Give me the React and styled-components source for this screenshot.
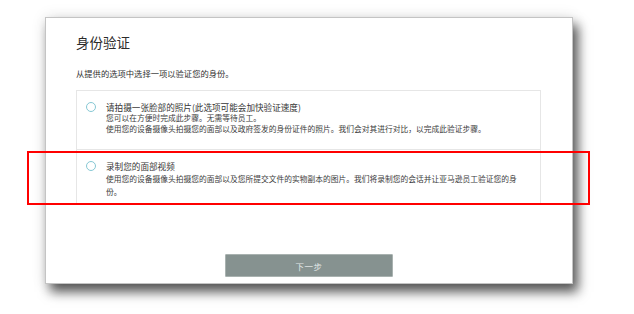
import React from "react";
import styled, { createGlobalStyle } from "styled-components";

const GlobalStyle = createGlobalStyle`
  html, body {
    margin: 0;
    padding: 0;
    background: #ffffff;
  }
  body {
    font-family: "Noto Sans CJK SC", "Noto Sans", "Liberation Sans", sans-serif;
  }
`;

const Page = styled.div`
  position: relative;
  width: 634px;
  height: 314px;
  padding: 17px 0 0 45px;
  box-sizing: border-box;
  overflow: hidden;
  background: #ffffff;
`;

const Card = styled.div`
  width: 528px;
  height: 267px;
  box-sizing: border-box;
  background: #ffffff;
  border: 1px solid #c4c4c4;
  box-shadow: 5px 8px 11px rgba(0, 0, 0, 0.65), 0 0 14px rgba(0, 0, 0, 0.1);
  padding: 15px 0 0 30px;
  display: flex;
  flex-direction: column;
`;

const Title = styled.h1`
  margin: 0;
  font-size: 13.5px;
  line-height: 18px;
  font-weight: 400;
  color: #2b2b2b;
`;

const Subtitle = styled.p`
  margin: 16px 0 0;
  font-size: 8.3px;
  line-height: 12px;
  color: #2f2f2f;
`;

const OptionList = styled.div`
  margin-top: 11px;
  width: 465px;
  box-sizing: border-box;
  border: 1px solid #e6e6e6;
  display: flex;
  flex-direction: column;
`;

const Option = styled.label`
  display: flex;
  gap: 10px;
  padding: 10px 0 ${props => props.bottom}px 9px;
  border-top: ${props => (props.first ? "none" : "1px solid #e6e6e6")};
  cursor: pointer;
`;

const Radio = styled.span`
  flex: none;
  width: 10px;
  height: 10px;
  margin-top: 1px;
  box-sizing: border-box;
  border: 1.2px solid #86c8d4;
  border-radius: 50%;
`;

const OptionText = styled.div`
  width: 414px;
  display: flex;
  flex-direction: column;
`;

const OptionTitle = styled.div`
  font-size: 8.6px;
  line-height: 12px;
  color: #363636;
`;

const OptionDetail = styled.div`
  font-size: 7.75px;
  line-height: ${props => props.lineHeight}px;
  color: #3c3c3c;
`;

const NextButton = styled.button`
  align-self: center;
  margin: 49px 0 0 -30px;
  width: 168px;
  height: 23px;
  border: 1px solid #a9b2b0;
  border-radius: 1px;
  background: #869290;
  color: #e4e9e8;
  font-family: inherit;
  font-size: 8.5px;
  letter-spacing: 0.5px;
`;

const Highlight = styled.div`
  position: absolute;
  left: 27px;
  top: 151px;
  width: 563px;
  height: 54px;
  box-sizing: border-box;
  border: 2px solid #ff0000;
  pointer-events: none;
`;

const options = [
  {
    title: "请拍摄一张脸部的照片(此选项可能会加快验证速度)",
    lines: [
      "您可以在方便时完成此步骤。无需等待员工。",
      "使用您的设备摄像头拍摄您的面部以及政府签发的身份证件的照片。我们会对其进行对比，以完成此验证步骤。",
    ],
    lineHeight: 10.5,
    bottom: 15,
  },
  {
    title: "录制您的面部视频",
    lines: [
      "使用您的设备摄像头拍摄您的面部以及您所提交文件的实物副本的图片。我们将录制您的会话并让亚马逊员工验证您的身份。",
    ],
    lineHeight: 13,
    bottom: 6,
  },
];

const App = () => {
  return (
    <Page>
      <GlobalStyle />
      <Card>
        <Title>身份验证</Title>
        <Subtitle>从提供的选项中选择一项以验证您的身份。</Subtitle>
        <OptionList>
          {options.map((opt, i) => (
            <Option key={i} first={i === 0} bottom={opt.bottom}>
              <Radio />
              <OptionText>
                <OptionTitle>{opt.title}</OptionTitle>
                {opt.lines.map((line, j) => (
                  <OptionDetail key={j} lineHeight={opt.lineHeight}>
                    {line}
                  </OptionDetail>
                ))}
              </OptionText>
            </Option>
          ))}
        </OptionList>
        <NextButton>下一步</NextButton>
      </Card>
      <Highlight />
    </Page>
  );
};

export default App;
